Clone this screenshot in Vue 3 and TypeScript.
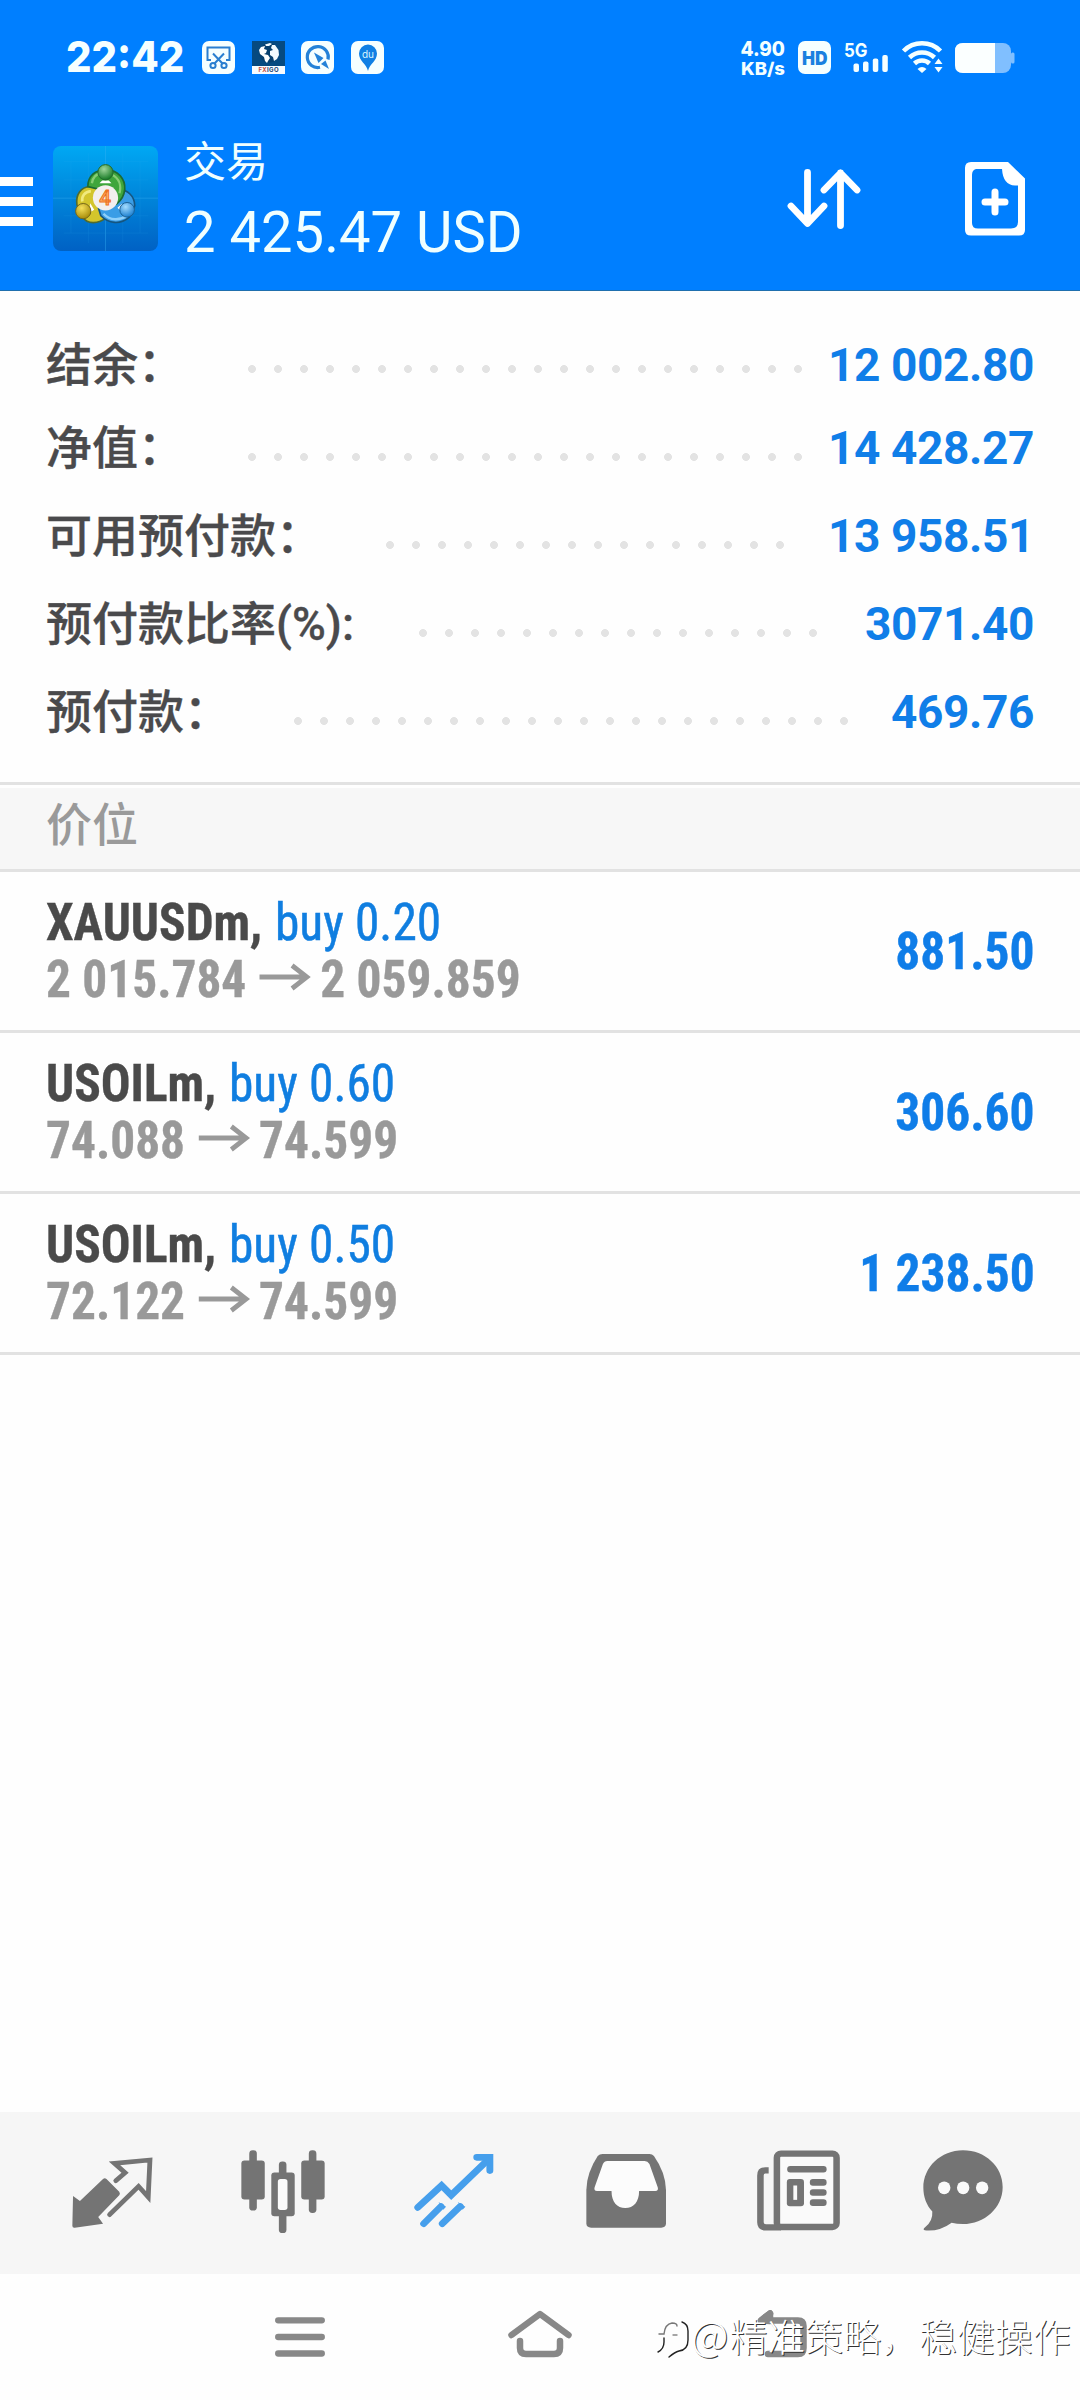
<script setup lang="ts">
interface SummaryRow {
  label: string
  value: string
  shift: number
  dotsLeft: number
  dots: number
}

interface Position {
  symbol: string
  side: string
  open: string
  current: string
  profit: string
}

const summary: SummaryRow[] = [
  { label: '结余：', value: '12 002.80', shift: 5, dotsLeft: 248, dots: 22 },
  { label: '净值：', value: '14 428.27', shift: 0, dotsLeft: 248, dots: 22 },
  { label: '可用预付款：', value: '13 958.51', shift: 0, dotsLeft: 386, dots: 16 },
  { label: '预付款比率(%):', value: '3071.40', shift: 0, dotsLeft: 419, dots: 16 },
  { label: '预付款：', value: '469.76', shift: 0, dotsLeft: 294, dots: 22 },
]

const positions: Position[] = [
  { symbol: 'XAUUSDm,', side: 'buy 0.20', open: '2 015.784', current: '2 059.859', profit: '881.50' },
  { symbol: 'USOILm,', side: 'buy 0.60', open: '74.088', current: '74.599', profit: '306.60' },
  { symbol: 'USOILm,', side: 'buy 0.50', open: '72.122', current: '74.599', profit: '1 238.50' },
]
</script>

<template>
  <div class="screen">
    <header class="top">
      <div class="status">
        <span class="clock"><span>22:42</span></span>
        <svg class="st-icon" viewBox="0 0 33 33">
          <rect width="33" height="33" rx="7" fill="#f6ffff" />
          <g fill="none" stroke="#2a7fd0" stroke-width="2">
            <path d="M9 19H5.5V6.500H27.500V19H24" />
            <path d="M11 12.500L20.500 22.500M22 12.500L12.500 22.500" />
            <circle cx="11" cy="24.500" r="2.600" />
            <circle cx="22" cy="24.500" r="2.600" />
          </g>
        </svg>
        <svg class="st-icon" viewBox="0 0 33 33">
          <rect width="33" height="33" fill="#064a80" />
          <rect y="25" width="33" height="8" fill="#f8fcff" />
          <circle cx="17" cy="12" r="9.800" fill="#08406e" />
          <path d="M7 9L9 6L13 5L12 8L15 9L14 12L12 13L16 14L18 17L16 20L15 22L13 20L12 16L8 13Z" fill="#fff" />
          <path d="M13 3.500L18 2L20 3L17 5L14 5ZM20 4L23 4L26.500 9L27 14L25 18L22 20L21 16L18 14L18 10L21 9L19 7Z" fill="#f2fbff" />
          <text x="6.500" y="31.300" font-size="6" font-weight="700" textLength="20" fill="#14406f"><tspan fill="#c8503c">FX</tspan>IGO</text>
        </svg>
        <svg class="st-icon" viewBox="0 0 33 33">
          <rect width="33" height="33" rx="7" fill="#f6ffff" />
          <path d="M19 26.300A10.500 10.500 0 1 1 27 18.500" fill="none" stroke="#2482d8" stroke-width="3.200" />
          <path d="M13 11.500L22.500 17L17.500 22Z" fill="#2482d8" />
          <path d="M20 23L24.500 19.500L28 28Z" fill="#2482d8" />
        </svg>
        <svg class="st-icon" viewBox="0 0 33 33">
          <rect width="33" height="33" rx="7" fill="#f6ffff" />
          <path d="M17 30C15.500 23 8 20 8 12.500A9 9 0 0 1 26 12.500C26 20 18.500 23 17 30Z" fill="#1180e4" />
          <text x="11" y="16.500" font-size="10" textLength="12" fill="#d8f6ff">du</text>
        </svg>
        <span class="gap"></span>
        <svg class="speed" viewBox="0 0 46 40">
          <text x="0.500" y="18.300" font-size="20" textLength="44.500" lengthAdjust="spacingAndGlyphs">4.90</text>
          <text x="1" y="37" font-size="17.500" textLength="44" lengthAdjust="spacingAndGlyphs">KB/s</text>
        </svg>
        <svg class="hd" viewBox="0 0 33 33">
          <rect width="33" height="33" rx="7" fill="#f6ffff" />
          <text x="4" y="23.500" font-size="19" textLength="25.500" lengthAdjust="spacingAndGlyphs">HD</text>
        </svg>
        <svg class="signal" viewBox="0 0 46 34">
          <text x="0" y="15.500" font-size="19" textLength="23.500" lengthAdjust="spacingAndGlyphs">5G</text>
          <rect x="9.500" y="22.500" width="5.500" height="8.500" rx="2" />
          <rect x="19" y="20.500" width="5.500" height="10.500" rx="2" />
          <rect x="28.800" y="17.500" width="5.500" height="13.500" rx="2" />
          <rect x="38.300" y="14" width="5.500" height="17" rx="2" />
        </svg>
        <svg class="wifi" viewBox="0 0 42 34">
          <g fill="none" stroke="#f4ffff" stroke-width="4.600">
            <path d="M1.500 10A26 26 0 0 1 38.500 10" />
            <path d="M7.500 16.500A18 18 0 0 1 32.500 16.500" />
            <path d="M12.500 22.500A11 11 0 0 1 27.500 22.500" />
          </g>
          <path d="M15.500 28Q20 24 24.500 28L20 32Z" fill="#f4ffff" />
          <path d="M32.500 23L36.500 17.500L40.500 23ZM32.500 26L36.500 31.500L40.500 26Z" fill="#f4ffff" />
        </svg>
        <svg class="battery" viewBox="0 0 60 30">
          <rect x="0" y="0" width="56" height="30" rx="8" fill="#80bfff" />
          <rect x="56" y="9.500" width="3.500" height="11" rx="1.500" fill="#80bfff" />
          <path d="M8 0H40V30H8Q0 30 0 22V8Q0 0 8 0Z" fill="#fbffff" />
        </svg>
      </div>

      <div class="bar">
        <div class="burger"><i></i><i></i><i></i></div>
        <svg class="logo" viewBox="38 48 316 316">
          <defs>
            <linearGradient id="bg" x1="0" y1="0" x2="0" y2="1">
              <stop offset="0" stop-color="#00a8f4" />
              <stop offset="0.450" stop-color="#0088dc" />
              <stop offset="1" stop-color="#0061c4" />
            </linearGradient>
            <radialGradient id="gr" cx="0.400" cy="0.300" r="0.700">
              <stop offset="0" stop-color="#9fd69a" /><stop offset="1" stop-color="#177a26" />
            </radialGradient>
            <radialGradient id="ye" cx="0.400" cy="0.300" r="0.700">
              <stop offset="0" stop-color="#f5e05a" /><stop offset="1" stop-color="#a88c0a" />
            </radialGradient>
            <radialGradient id="bl" cx="0.400" cy="0.300" r="0.700">
              <stop offset="0" stop-color="#a5ddff" /><stop offset="1" stop-color="#1c7fd0" />
            </radialGradient>
          </defs>
          <rect x="38" y="48" width="316" height="316" rx="24" fill="url(#bg)" />
          <g stroke="#39b4f5" stroke-width="1.500" opacity="0.450">
            <path d="M196 48V364M38 205H354" stroke-width="2.500" />
            <path d="M92 95V310M300 95V310M70 95H325M70 310H325M145 70V340M248 70V340M70 150H325M70 258H325" opacity="0.500" />
          </g>
          <path d="M110 225C106 195 120 172 150 170L180 172L200 262C175 284 140 284 128 262Z" fill="#d3c52c" stroke="#4f6b30" stroke-width="5" />
          <path d="M126 215C124 198 134 186 152 184" fill="none" stroke="#f1ea7c" stroke-width="8" />
          <path d="M235 178C262 180 284 198 284 228L268 262C240 286 205 282 182 258L175 235Z" fill="#3a9de6" stroke="#15557f" stroke-width="5" />
          <path d="M190 252C210 274 240 272 260 258" fill="none" stroke="#8fd0fa" stroke-width="7" />
          <path d="M143 170C143 138 165 120 197 120C235 120 256 148 254 178C252 200 243 212 230 222L224 190Z" fill="#3fa63c" stroke="#1c6b33" stroke-width="5" />
          <path d="M155 160C158 142 170 132 182 130M215 134C238 146 244 168 238 190" fill="none" stroke="#86cd74" stroke-width="7" />
          <path d="M178 160L186 152H206L214 160ZM150 220L162 240L146 250ZM232 234L246 222L248 250Z" fill="#fff" />
          <circle cx="196" cy="127" r="23" fill="url(#gr)" stroke="#236b2c" stroke-width="3" />
          <circle cx="129" cy="244" r="23" fill="url(#ye)" stroke="#756719" stroke-width="3" />
          <circle cx="261" cy="240" r="22" fill="url(#bl)" stroke="#1a6095" stroke-width="3" />
          <circle cx="196" cy="204" r="38" fill="#f3efee" />
          <text x="177" y="226" font-size="62" font-weight="500" fill="#ffb46a" stroke="#ee7022" stroke-width="3">4</text>
        </svg>
        <div class="titles">
          <div class="title">交易</div>
          <div class="total"><span>2 425.47 USD</span></div>
        </div>
        <svg class="sort" viewBox="0 0 76 62" fill="none" stroke="#fff" stroke-width="6.800" stroke-linecap="round" stroke-linejoin="round">
          <path d="M21.500 4.500V55M5 38L21.500 55.500L38 38" />
          <path d="M54.500 57.500V5M38 22L54.500 5L71 22" />
        </svg>
        <svg class="doc" viewBox="0 0 60 74">
          <path d="M6 0H43L60 16.500V68Q60 73.500 54 73.500H6Q0 73.500 0 68V6Q0 0 6 0ZM11 7Q7 8 7 13V61Q7 66.500 13 66.500H46Q53 66.500 53 60V23.500H50Q38 23 37 7Z" fill="#fff" fill-rule="evenodd" />
          <path d="M30 30V50M20 40H40" stroke="#fff" stroke-width="7" stroke-linecap="round" />
        </svg>
      </div>
    </header>

    <section class="summary">
      <div v-for="row in summary" :key="row.label" class="sum-row">
        <span class="sum-label" :style="{ marginTop: row.shift + 'px' }">{{ row.label }}</span>
        <span class="dots" :style="{ left: row.dotsLeft + 'px', width: row.dots * 26 + 'px' }"></span>
        <span class="sum-value" :style="{ marginTop: row.shift + 'px' }">{{ row.value }}</span>
      </div>
    </section>

    <div class="section"><span>价位</span></div>

    <section class="positions">
      <article v-for="(p, i) in positions" :key="i" class="pos">
        <div class="pos-main">
          <div class="pos-title"><b>{{ p.symbol }}</b> {{ p.side }}</div>
          <div class="pos-price">
            <span>{{ p.open }}</span>
            <svg viewBox="0 0 51 28" preserveAspectRatio="none" fill="none" stroke="#999" stroke-width="4.800"><path d="M0 14H48M33 2.500L48 14L33 25.500" /></svg>
            <span>{{ p.current }}</span>
          </div>
        </div>
        <div class="pos-profit">{{ p.profit }}</div>
      </article>
    </section>

    <div class="empty"></div>

    <nav class="tabs">
      <svg style="width: 80px" viewBox="210 172 232 216" preserveAspectRatio="none">
        <path d="M213 289L233 304L300 238Q305 233 310 238L347 276Q351 282 347 287L286 352L300 372L218 384Q211 385 211 378Z" fill="#747474" />
        <path d="M337 243L364 219L333 191L436 181L431 292L403 260L319 345" fill="none" stroke="#747474" stroke-width="14" stroke-linejoin="miter" stroke-linecap="round" />
      </svg>
      <svg style="width: 84px" viewBox="700 152 244 248" preserveAspectRatio="none" fill="#747474">
        <rect x="724" y="153" width="22" height="180" rx="10" /><rect x="701" y="183" width="68" height="117" rx="9" />
        <rect x="810" y="186" width="22" height="214" rx="10" /><rect x="788" y="219" width="68" height="131" rx="9" />
        <rect x="897" y="153" width="22" height="187" rx="10" /><rect x="875" y="183" width="68" height="117" rx="9" />
        <rect x="807" y="239" width="28" height="92" rx="8" fill="#fafafa" />
      </svg>
      <svg style="width: 80px" viewBox="1203 160 232 226" preserveAspectRatio="none" fill="none" stroke="#469fec" stroke-width="20" stroke-linecap="round">
        <path d="M1214 324L1283 258L1311 287L1418 180" />
        <path d="M1385 173H1423V213" />
        <path d="M1231 373L1281 321M1285 373L1337 321" />
        <path d="M1274 308L1296 322L1288 331ZM1330 308L1352 322L1344 331Z" fill="#469fec" stroke="none" />
      </svg>
      <svg style="width: 80px" viewBox="134 162 232 222" preserveAspectRatio="none">
        <path d="M182 162H318Q326 162 331 168Q365 218 366 270V370Q366 383 352 383H149Q135 383 135 370V270Q136 218 168 168Q173 162 182 162Z" fill="#747474" />
        <path d="M196 183Q187 183 183 192L159 262Q156 273 166 273H208C208 306 224 324 248 324S288 306 288 273H335Q345 273 342 262L318 192Q313 183 304 183Z" fill="#fcfcfc" />
      </svg>
      <svg style="width: 83px" viewBox="630 152 242 242" preserveAspectRatio="none">
        <path d="M664 213H654Q640 213 640 228V368Q640 383 656 383H700" fill="none" stroke="#747474" stroke-width="19" />
        <rect x="688" y="163" width="174" height="219" rx="12" fill="#fafafa" stroke="#747474" stroke-width="19" />
        <g fill="#747474">
          <rect x="718" y="200" width="115" height="19" rx="9" />
          <rect x="717" y="239" width="50" height="81" rx="9" />
          <rect x="784" y="239" width="49" height="20" rx="9" /><rect x="784" y="269" width="49" height="20" rx="9" /><rect x="784" y="299" width="49" height="20" rx="9" />
        </g>
        <rect x="736" y="258" width="11" height="43" fill="#fafafa" />
      </svg>
      <svg style="width: 80px" viewBox="1112 152 232 242" preserveAspectRatio="none">
        <path d="M1228 153C1292 153 1343 201 1343 263C1343 325 1290 373 1228 373Q1210 373 1195 369Q1160 396 1117 392Q1110 390 1118 383Q1141 365 1139 336C1122 317 1113 292 1113 265C1113 203 1164 153 1228 153Z" fill="#747474" />
        <g fill="#fafafa"><ellipse cx="1173.500" cy="265" rx="18" ry="19" /><ellipse cx="1228.500" cy="265" rx="18" ry="19" /><ellipse cx="1283.500" cy="265" rx="18" ry="19" /></g>
      </svg>
    </nav>

    <footer class="sysbar">
      <svg class="s-menu" viewBox="0 0 50 40" stroke="#888" stroke-width="6.300" stroke-linecap="round"><path d="M3.200 3.300H46.800M3.200 20H46.800M3.200 36.500H46.800" /></svg>
      <svg class="s-home" viewBox="0 0 64 48" fill="none" stroke="#888" stroke-width="6.500" stroke-linecap="round" stroke-linejoin="round">
        <path d="M3.500 25L32 4L60.500 25" /><path d="M12 31V38Q12 44 18 44H46Q52 44 52 38V31" />
      </svg>
      <svg class="s-back" viewBox="0 0 52 48" fill="none" stroke="#888" stroke-width="6.500" stroke-linecap="round" stroke-linejoin="round">
        <path d="M14 3.500L5 10.500H42Q47.500 10.500 47.500 16V38Q47.500 44 42 44H12" /><path d="M5 10.500L14 3.500V11Z" fill="#888" />
      </svg>
      <div class="watermark">
        <svg viewBox="0 0 36 42" fill="none" stroke-linecap="round">
          <g stroke="#222" stroke-width="1.400">
            <path d="M4 16H9Q10 6 17 5Q22 5 22 8" stroke="#777" />
            <path d="M27 4Q33 6 33 13V22Q33 32 24 33Q20 34 14 39" />
            <path d="M9 20V24Q9 31 3 34" /><path d="M18 17H22" stroke="#888" />
          </g>
        </svg>
        <span class="wm-text"><span class="at">@</span>精准策略，稳健操作</span>
      </div>
    </footer>
  </div>
</template>

<style>
body {
  margin: 0;
  background: #fefefe;
}
</style>

<style scoped>
.screen {
  width: 1080px;
  height: 2400px;
  display: flex;
  flex-direction: column;
  overflow: hidden;
  background: #fefefe;
  font-family: Roboto, "Noto Sans CJK SC", sans-serif;
}
svg {
  display: block;
  flex: none;
  overflow: visible;
}
.top {
  box-sizing: border-box;
  height: 291px;
  background: #007fff;
  border-bottom: 1px solid #1f6fae;
}
.status {
  display: flex;
  align-items: flex-start;
  height: 110px;
  padding: 41px 65px 0 66px;
  box-sizing: border-box;
  font-family: Inter, sans-serif;
}
.clock {
  width: 136px;
  font-size: 42px;
  line-height: 32px;
  font-weight: 800;
  color: #f6ffff;
  white-space: nowrap;
}
.clock span {
  display: inline-block;
  transform: scaleX(0.953);
  transform-origin: left;
}
.st-icon {
  width: 33px;
  height: 33px;
  margin-right: 16.500px;
}
.gap {
  flex: 1;
}
.speed {
  width: 46px;
  height: 40px;
  margin-right: 12px;
  margin-top: -3px;
}
.speed text,
.signal text {
  font-weight: 800;
  fill: #f4ffff;
}
.hd {
  width: 33px;
  height: 33px;
  margin-right: 13px;
}
.hd text {
  font-weight: 900;
  fill: #1a80e0;
}
.signal {
  width: 46px;
  height: 34px;
  margin-right: 12px;
  fill: #f6ffff;
}
.signal text {
  font-weight: 700;
}
.wifi {
  width: 42px;
  height: 34px;
  margin-right: 11px;
}
.battery {
  width: 60px;
  height: 30px;
  margin-top: 1.500px;
}
.bar {
  display: flex;
  align-items: flex-start;
  height: 180px;
}
.burger {
  width: 33px;
  margin: 67px 20px 0 0;
  display: flex;
  flex-direction: column;
  gap: 11px;
}
.burger i {
  height: 9px;
  background: #fff;
}
.logo {
  width: 105px;
  height: 105px;
  margin-top: 36px;
}
.titles {
  margin-left: 26px;
  color: #f0ffff;
  width: 601.500px;
}
.title {
  margin-top: 27px;
  font-size: 42px;
  line-height: 52px;
}
.total {
  margin-top: 11px;
  font-size: 57px;
  line-height: 66px;
  white-space: nowrap;
}
.total span {
  display: inline-block;
  transform: scaleX(0.985);
  transform-origin: left;
}
.sort {
  width: 76px;
  height: 62px;
  margin-top: 58px;
}
.doc {
  width: 60px;
  height: 74px;
  margin: 52px 0 0 103px;
}
.summary {
  height: 491px;
  padding-top: 34px;
  box-sizing: border-box;
}
.sum-row {
  position: relative;
  display: flex;
  justify-content: space-between;
  height: 88px;
  line-height: 60px;
  padding: 4px 46px 0 46px;
  box-sizing: border-box;
}
.sum-label {
  font-size: 46px;
  font-weight: 500;
  color: #4a4a4c;
  -webkit-text-stroke: 0.350px #4a4a4c;
  padding-top: 1px;
}
.sum-value {
  font-size: 46px;
  font-weight: 700;
  letter-spacing: -0.400px;
  padding-top: 1px;
  color: #107ee8;
}
.dots {
  position: absolute;
  top: 40px;
  height: 8px;
  background: radial-gradient(circle at 4px 4px, #e3e3e3 3.600px, transparent 4.300px) 0 0 / 26px 8px repeat-x;
}
.section {
  height: 90px;
  box-sizing: border-box;
  border-top: 3px solid #e2e2e2;
  border-bottom: 3px solid #e2e2e2;
  background: linear-gradient(#fefefe 3px, #f7f7f7 3px);
  padding-left: 46px;
  font-family: "Noto Sans CJK SC", sans-serif;
  font-size: 46px;
  line-height: 73px;
  font-weight: 500;
  color: #9a9a9a;
}
.pos {
  height: 161px;
  box-sizing: border-box;
  border-bottom: 3px solid #e2e2e2;
  display: flex;
  justify-content: space-between;
  padding: 0 45px 0 46px;
  font-family: "Roboto Condensed", Roboto, sans-serif;
  font-stretch: 75%;
  font-size: 52px;
  white-space: nowrap;
}
.pos-main {
  padding-top: 22px;
  transform: scaleX(0.949);
  transform-origin: left;
}
.pos-title,
.pos-price {
  height: 57px;
  line-height: 57px;
}
.pos-title {
  color: #107ee0;
  -webkit-text-stroke: 0.500px #107ee0;
}
.pos-title b {
  color: #4a4a4a;
  margin-right: 1.500px;
  -webkit-text-stroke: 0.400px #4a4a4a;
}
.pos-price {
  display: flex;
  font-weight: 700;
  color: #999;
  -webkit-text-stroke: 0.400px #999;
}
.pos-price svg {
  width: 53px;
  height: 28px;
  margin: 12px 11px 0 14px;
}
.pos-profit {
  line-height: 159px;
  font-weight: 700;
  color: #0f7de8;
  -webkit-text-stroke: 0.400px #0f7de8;
  transform: scaleX(0.95);
  transform-origin: right;
}
.empty {
  flex: 1;
}
.tabs {
  height: 162px;
  box-sizing: border-box;
  background: #f6f6f6;
  display: flex;
  align-items: flex-start;
  padding-left: 72px;
}
.tabs svg:nth-child(1) { height: 72px; margin-top: 45px; }
.tabs svg:nth-child(2) { height: 83px; margin: 38px 0 0 89px; }
.tabs svg:nth-child(3) { height: 75px; margin: 41px 0 0 89px; }
.tabs svg:nth-child(4) { height: 74px; margin: 42px 0 0 92px; }
.tabs svg:nth-child(5) { height: 81px; margin: 38px 0 0 91px; }
.tabs svg:nth-child(6) { height: 81px; margin: 38px 0 0 83px; }
.sysbar {
  position: relative;
  height: 126px;
  display: flex;
  align-items: flex-start;
}
.s-menu { width: 50px; height: 40px; margin: 43px 0 0 275px; }
.s-home { width: 64px; height: 48px; margin: 36px 0 0 183px; }
.s-back { width: 52px; height: 48px; margin: 36px 0 0 184px; }
.watermark {
  position: absolute;
  left: 655px;
  top: 32px;
  display: flex;
  align-items: center;
  height: 56px;
}
.watermark svg {
  width: 36px;
  height: 42px;
  margin-top: 10px;
}
.wm-text {
  font-family: "Noto Sans CJK SC", sans-serif;
  font-size: 37.900px;
  font-weight: 300;
  line-height: 56px;
  color: #fff;
  white-space: nowrap;
  text-shadow: 1px 1px 0.500px #333;
}
.at {
  display: inline-block;
  width: 38.500px;
  font-size: 41px;
}
</style>
